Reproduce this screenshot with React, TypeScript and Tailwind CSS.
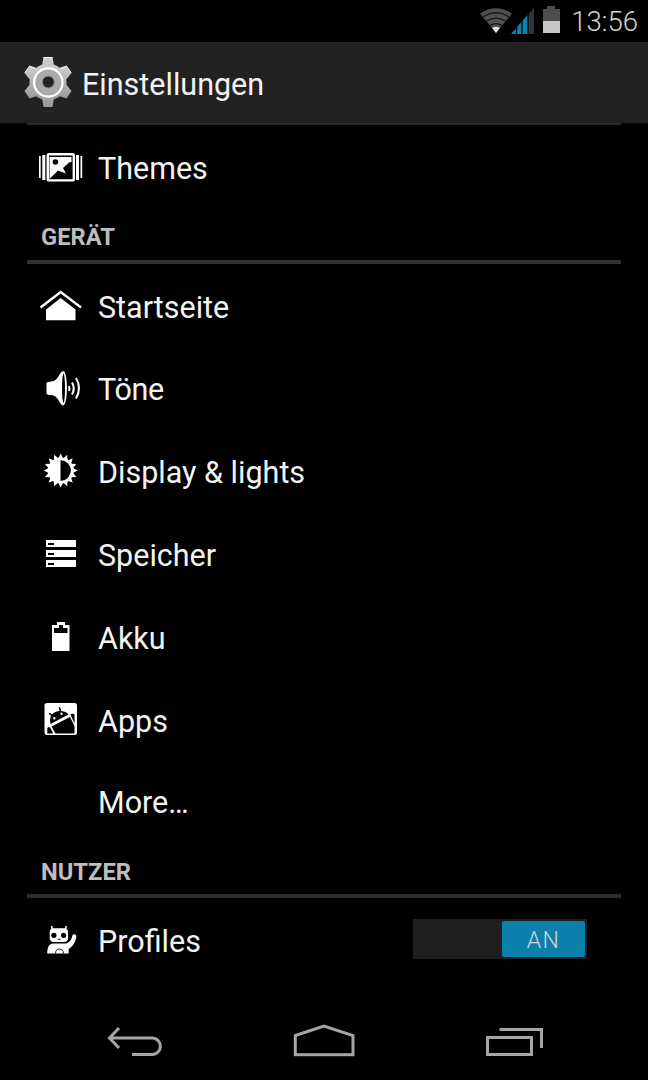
import type { ReactNode } from 'react';

const font = "font-['Roboto','Noto_Sans',sans-serif]";

function RowIcon({ top, children }: { top: number; children?: ReactNode }) {
  return (
    <svg className="h-[82px] w-[50px] shrink-0" viewBox={`36 ${top} 50 82`} fill="#fff">
      {children}
    </svg>
  );
}

function Row({ height, label, spacing = 'pt-[26px]', children, end }: { height: string; label: string; spacing?: string; children: ReactNode; end?: ReactNode }) {
  return (
    <div className={`flex items-start pl-9 ${height}`}>
      {children}
      <span className={`ml-3 flex-1 text-[30.5px] leading-9 whitespace-nowrap text-[#f3f3f3] ${spacing}`}>{label}</span>
      {end}
    </div>
  );
}

function Section({ title, spacing }: { title: string; spacing: string }) {
  return (
    <div className={`mx-[27px] flex h-14 items-start border-b-4 border-[#303030] pl-[14px] ${spacing}`}>
      <h2 className="text-[23.7px] leading-7 font-bold text-[#bdbdbd]">{title}</h2>
    </div>
  );
}

function StatusBar() {
  return (
    <div className="flex h-[42px] justify-end pr-[10px]">
      <svg className="h-[42px] w-[86px]" viewBox="478 0 86 42">
        <path d="M496 33 480 13.5Q496 3 512 13.5Z" fill="#505050" />
        <path d="M483 17Q496 8.5 509 17M486.500 21.300Q496 15 505.500 21.300M490 25.600Q496 21.500 502 25.600" fill="none" stroke="#181818" strokeWidth="1.300" />
        <path d="m496 33-4-5q4-2.500 8 0Z" fill="#ddd" />
        <path d="M511 34 534 8V34Z" fill="#333" />
        <path d="M511 34 528 14.500V34Z" fill="#0b83b2" />
        <path d="M516.500 25v9M522 19v15M528 12v22" stroke="#000" strokeWidth="1.300" />
        <path d="M543 9h4V6h8v3h5v12h-17Z" fill="#4d4d4d" />
        <path d="M543 21h17v12h-17Z" fill="#c7c7c7" />
      </svg>
      <span className="ml-[7px] pt-[4px] text-[27.5px] leading-9 font-light text-[#d0d0d0]">13:56</span>
    </div>
  );
}

function Gear() {
  return (
    <svg className="h-[82px] w-[58px] shrink-0" viewBox="20 42 58 82">
      <defs>
        <linearGradient id="metal" x1="0" y1="0" x2="0" y2="1">
          <stop offset="0" stopColor="#d0d0d0" />
          <stop offset="1" stopColor="#999" />
        </linearGradient>
      </defs>
      <g fill="url(#metal)">
        <circle cx="48" cy="82" r="18.500" />
        <path d="M43.500 57h9l1.500 9H42ZM43.500 107h9l1.500-9H42Z" />
        <path d="m24.500 73 5-7.500 9 3-8 12ZM71.500 73l-5-7.500-9 3 8 12ZM24.500 91l5 7.500 9-3-8-12ZM71.500 91l-5 7.500-9-3 8-12Z" />
      </g>
      <path d="M43.500 57.500h9M24.800 72.800l4.700-6.500 6 2.500M71.200 72.800l-4.700-6.500-6 2.500" stroke="#eee" fill="none" />
      <circle cx="48.300" cy="82.500" r="14.200" fill="#aaa" stroke="#fff" strokeWidth="2.200" />
      <circle cx="48.300" cy="82" r="6" fill="#222" stroke="#8b8b8b" />
    </svg>
  );
}

function Toggle() {
  return (
    <div className="mt-[21px] mr-[61px] flex h-[40px] w-[174px] justify-end bg-[#1f1f1f] p-[2px]">
      <div className="flex h-[36px] w-[83px] items-center justify-center rounded-[2px] bg-[#0c80ad] pt-[4px] text-[23px] font-light tracking-[1.5px] text-[#d3d3d3]">AN</div>
    </div>
  );
}

export default function App() {
  return (
    <div className={`flex h-[1080px] w-[648px] flex-col overflow-hidden bg-black ${font}`}>
      <StatusBar />
      <header className="flex h-[81px] shrink-0 items-start bg-[#222] pl-5">
        <Gear />
        <h1 className="ml-1 pt-[25px] text-[30.5px] leading-9 text-[#f3f3f3]">Einstellungen</h1>
      </header>
      <div className="mx-[27px] h-[2px] shrink-0 bg-[#2b2b2b]" />
      <main className="flex flex-col">
        <Row height="h-[83px]" label="Themes">
          <RowIcon top={125}>
            <path d="M39 156h1.700v22H39ZM42.300 155h3v25h-3ZM76 155h3v25h-3ZM80.500 156h1.700v22h-1.700Z" />
            <rect x="47.800" y="154.200" width="26" height="26.200" rx="1" fill="none" stroke="#fff" strokeWidth="2.400" />
            <path d="M49.500 157h22v5l-2.500.5-6 5.500 3 5.500-8-3-8.500 8.500Z" />
            <circle cx="55.400" cy="162" r="2.800" fill="#000" />
          </RowIcon>
        </Row>
        <Section title="GERÄT" spacing="pt-[15px]" />
        <Row height="h-[83px]" label="Startseite">
          <RowIcon top={264}>
            <path d="M40.500 307.500 60.700 292 81 307.500" fill="none" stroke="#fff" strokeWidth="2.400" />
            <path d="m60.700 298 14.800 11.500v10.700H46V309.500Z" />
          </RowIcon>
        </Row>
        <Row height="h-[82px]" label="Töne" spacing="pt-[25px] tracking-[-0.3px]">
          <RowIcon top={347}>
            <path d="M46.500 383q1-1.500 5-1.500 4.500 0 8-7 2-3.500 3.700-3.500c5 0 5 34.500 0 34.500q-1.700 0-3.700-3.500-3.500-7-8-7-4 0-5-1.500Z" />
            <ellipse cx="63.500" cy="388.300" rx="1.500" ry="14.500" fill="#000" />
            <path d="M60 380q4.500 8 0 17Z" />
            <path d="M69 386q1 2.500 0 5M72 382.500q3.500 6 0 12M76 378q6 10 0 20.500" fill="none" stroke="#fff" strokeWidth="2" />
          </RowIcon>
        </Row>
        <Row height="h-[83px]" label="Display & lights">
          <RowIcon top={429}>
            <circle cx="60.700" cy="470.500" r="13" />
            <path d={Array.from({ length: 16 }, (_, i) => {
              const p = (r: number, t: number) => `${60.7 + r * Math.sin(t)} ${470.5 - r * Math.cos(t)}`;
              const a = (i * Math.PI) / 8;
              return `M${p(12.3, a - 0.2)}L${p(17, a)}L${p(12.3, a + 0.2)}Z`;
            }).join('')} />
            <path d="M60.500 460.200a10.400 10.400 0 0 1 0 20.800Z" fill="#000" />
          </RowIcon>
        </Row>
        <Row height="h-[83px]" label="Speicher">
          <RowIcon top={512}>
            <path d="M46 540h30v7H46ZM46 550h30v7H46ZM46 560h30v7H46Z" />
            <path d="M48 543h6v2h-6ZM48 553h6v2h-6ZM48 563h6v2h-6Z" fill="#000" />
          </RowIcon>
        </Row>
        <Row height="h-[83px]" label="Akku">
          <RowIcon top={595}>
            <path d="M52 625h5v-3h8v3h4.500v26H52Z" />
            <path d="M54 628h5v-3h4v3h4.500v5H54Z" fill="#000" />
          </RowIcon>
        </Row>
        <Row height="h-[82px]" label="Apps">
          <RowIcon top={678}>
            <rect x="44.500" y="703" width="32.500" height="32" rx="2.500" />
            <path d="M50.500 724c-2-8 3-13 9.500-13 4 0 7 1.500 8.500 3.500Z" fill="#000" />
            <path d="M51.500 726.500 70 717l4.500 9v7.500H55.500Z" fill="#000" />
            <path d="m49.300 713.300 3.200 2.500m6.800-8.500 1.200 3.700" stroke="#000" strokeWidth="1.500" />
            <path d="M70.500 714.500q2.500-1.500 4 0v9ZM47.300 728q2-2 3 0l3 5.500h-6Z" fill="#000" />
            <circle cx="54.300" cy="718.300" r="1.200" /><circle cx="61.500" cy="713.800" r="1.200" />
          </RowIcon>
        </Row>
        <Row height="h-[82px]" label="More…" spacing="pt-[25px]"><RowIcon top={760} /></Row>
        <Section title="NUTZER" spacing="pt-4" />
        <Row height="h-[82px]" label="Profiles" end={<Toggle />}>
          <RowIcon top={898}>
            <path d="M51.500 926 52.800 930.500M66.300 926 65 930.500" stroke="#fff" strokeWidth="1.500" />
            <rect x="49.700" y="928.300" width="18.300" height="13.700" rx="4" />
            <path d="M47.200 953.500c0-6.500 2-10 6-10h11c4 0 6-2 7.500-5.500q.5-4 2.500-3.800 2.700.3 2 3.800c-1.500 6-4.500 9-7.500 11v4.500Z" />
            <circle cx="53.900" cy="935.300" r="2.600" fill="#000" /><circle cx="63.600" cy="935.300" r="2.600" fill="#000" />
            <path d="M57.500 939.300h3M55.500 953.500q0-4.500 4-4.500t4 4.500" fill="none" stroke="#000" strokeWidth=".9" />
          </RowIcon>
        </Row>
      </main>
      <nav className="flex h-[100px] items-start pt-[30px] pl-[100px]">
        <svg className="h-14 w-[70px]" viewBox="100 1010 70 56" fill="none" stroke="#a5a5a5" strokeWidth="3">
          <path d="M109 1038h44a8.300 8.300 0 0 1 0 16.500h-21M119 1028l-9.500 10 9.500 10" />
        </svg>
        <svg className="ml-[115px] h-14 w-[80px]" viewBox="285 1010 80 56" fill="none" stroke="#a5a5a5" strokeWidth="3">
          <path d="M295.300 1035.500 324 1026l29 9.500v19.200h-57.700Z" />
        </svg>
        <svg className="ml-[115px] h-14 w-[70px]" viewBox="480 1010 70 56" fill="none" stroke="#a5a5a5" strokeWidth="3">
          <path d="M487.500 1037.500h44v17h-44ZM499.500 1029.500h42v18.500" />
        </svg>
      </nav>
    </div>
  );
}
